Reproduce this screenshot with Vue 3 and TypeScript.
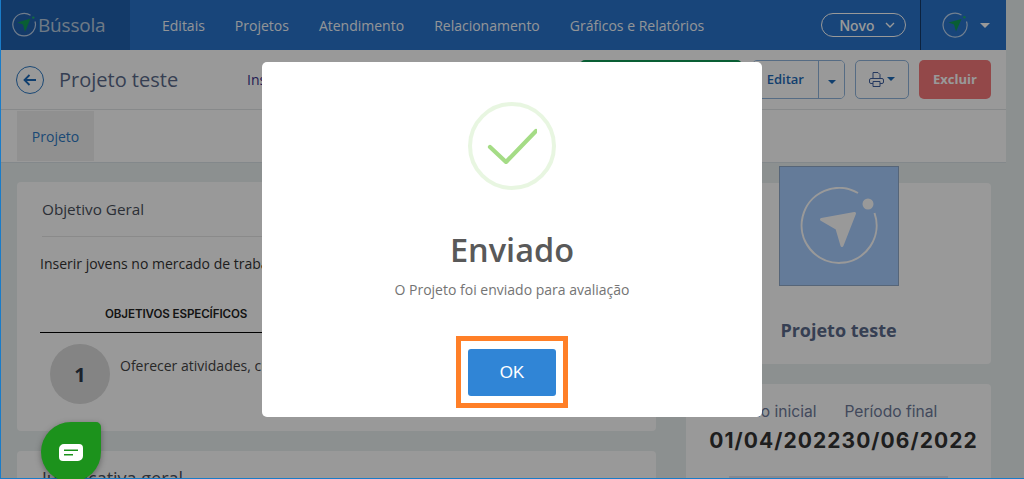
<script setup lang="ts">
const navItems: string[] = ['Editais', 'Projetos', 'Atendimento', 'Relacionamento', 'Gráficos e Relatórios']
</script>

<template>
  <div class="page">
    <div class="shell">
      <header class="topbar">
        <div class="brand">
          <svg class="brand-mark" viewBox="0 0 26 26" fill="none">
            <path d="M19.500 3.300A11.300 11.300 0 1 0 24 9.500" stroke="#fff" stroke-opacity=".7" stroke-width="1.200" />
            <circle cx="22.300" cy="5.600" r="1.200" fill="#1eb16a" />
            <path d="M6.500 10.500 19.500 6.500 14 20 12 12.500z" fill="#0f9d58" />
          </svg>
          <span class="brand-name">Bússola</span>
        </div>
        <nav class="nav">
          <a v-for="item in navItems" :key="item" class="nav-item">{{ item }}</a>
        </nav>
        <button class="new-btn">
          Novo
          <svg width="10" height="6" viewBox="0 0 10 6" fill="none"><path d="M1 1l4 4 4-4" stroke="#fff" stroke-width="1.400" /></svg>
        </button>
        <div class="user">
          <svg width="26" height="26" viewBox="0 0 26 26" fill="none">
            <path d="M19.500 3A12 12 0 1 0 24.500 9.500" stroke="#fff" stroke-opacity=".7" stroke-width="1.200" />
            <circle cx="22.400" cy="5.200" r="1.200" fill="#1eb16a" />
            <path d="M6.500 10.500 19.500 7 14 19.500 12 12.500z" fill="#0f9d58" />
          </svg>
          <span class="caret caret-light"></span>
        </div>
      </header>

      <section class="subbar">
        <span class="back">
          <svg width="14" height="12" viewBox="0 0 14 12" fill="none"><path d="M6.500 1 1.500 6l5 5M2 6h11" stroke="#1d6ab8" stroke-width="1.800" /></svg>
        </span>
        <h1 class="title">Projeto teste</h1>
        <span class="status">Inserir</span>
        <div class="actions">
          <button class="btn-send">Enviar para avaliação</button>
          <div class="split">
            <button class="btn-edit">Editar</button>
            <button class="btn-more"><span class="caret caret-small"></span></button>
          </div>
          <button class="btn-print">
            <svg width="15" height="15" viewBox="0 0 15 15" fill="none" stroke="#3f5f9f" stroke-width="1"><path d="M4 6.500V.5h5l2 2v4M4 11.500H2A1.500 1.500 0 0 1 .5 10V8A1.500 1.500 0 0 1 2 6.500h11A1.500 1.500 0 0 1 14.500 8v2a1.500 1.500 0 0 1-1.500 1.500h-2M4 9.500h7v5H4z" /></svg>
            <span class="caret caret-small"></span>
          </button>
          <button class="btn-delete">Excluir</button>
        </div>
      </section>

      <div class="tabs">
        <a class="tab">Projeto</a>
      </div>

      <main class="content">
        <div class="col-main">
          <article class="card card-goal">
            <h2 class="card-title">Objetivo Geral</h2>
            <p class="goal-text">Inserir jovens no mercado de trabalho por meio de capacitação</p>
            <div class="table-head"><span>OBJETIVOS ESPECÍFICOS</span></div>
            <div class="goal-row">
              <span class="goal-num">1</span>
              <p>Oferecer atividades, cursos e oficinas de qualificação</p>
            </div>
          </article>
          <article class="card card-why">
            <h2 class="card-title">Justificativa geral</h2>
          </article>
        </div>
        <aside class="col-side">
          <div class="card card-profile">
            <div class="cover">
              <svg width="78" height="78" viewBox="0 0 78 78" fill="none">
                <path d="M58 6A37.500 37.500 0 1 0 74.500 26" stroke="#fff" stroke-width="2" />
                <circle cx="68" cy="17" r="5.500" fill="#fff" />
                <path d="M21.500 32.500 54.500 26.500 42 58.500 37 41.500z" fill="#fff" stroke="#fff" stroke-width="3" stroke-linejoin="round" />
              </svg>
            </div>
            <strong class="profile-name">Projeto teste</strong>
          </div>
          <div class="card card-period">
            <div class="period-labels"><span>Período inicial</span><span>Período final</span></div>
            <div class="period-dates"><span>01/04/2022</span><span>30/06/2022</span></div>
            <div class="period-bar"></div>
          </div>
        </aside>
      </main>
    </div>

    <div class="overlay">
      <div class="modal">
        <div class="success">
          <svg width="50" height="36" viewBox="0 0 50 36" fill="none">
            <path d="M3 19 19 34 49 3" stroke="#a5dc86" stroke-width="4.200" stroke-linecap="round" stroke-linejoin="round" />
          </svg>
        </div>
        <h2 class="modal-title">Enviado</h2>
        <p class="modal-text">O Projeto foi enviado para avaliação</p>
        <div class="ok-frame">
          <button class="ok">OK</button>
        </div>
      </div>
    </div>

    <button class="chat">
      <svg class="chat-icon" width="24" height="18" viewBox="0 0 24 18">
        <path fill-rule="evenodd" d="M5 0h15a4 4 0 0 1 4 4v8a5 5 0 0 1-5 5H4a4 4 0 0 1-4-4V5a5 5 0 0 1 5-5zM5 5.500v1.600h14V5.500zM5 10v1.600h9V10z" fill="#fff" />
      </svg>
    </button>
  </div>
</template>

<style>
html,
body {
  margin: 0;
  overflow: hidden;
}
</style>

<style scoped>
.page {
  position: relative;
  width: 1024px;
  height: 479px;
  overflow: hidden;
  background: #eaf0f0;
  font-family: 'Open Sans', 'Liberation Sans', sans-serif;
  box-sizing: border-box;
}
.shell {
  width: 1006px;
  display: flex;
  flex-direction: column;
}
h1,
h2,
p {
  margin: 0;
  font-weight: 400;
}
button {
  font-family: inherit;
  cursor: pointer;
}
.topbar {
  height: 50px;
  flex: none;
  display: flex;
  align-items: center;
  background: #2873cb;
  color: #fff;
}
.brand {
  width: 130px;
  height: 50px;
  flex: none;
  display: flex;
  align-items: center;
  gap: 1px;
  padding-left: 11px;
  box-sizing: border-box;
  background: #2161b0;
}
.brand-mark {
  width: 26px;
  height: 26px;
}
.brand-name {
  font-size: 19px;
  color: #dfe5ea;
  opacity: 0.8;
  letter-spacing: -0.2px;
}
.nav {
  display: flex;
  gap: 30px;
  margin-left: 32px;
  flex: 1;
}
.nav-item {
  font-size: 14px;
  color: #fff;
  opacity: 0.95;
}
.new-btn {
  width: 85px;
  height: 24px;
  display: flex;
  align-items: center;
  justify-content: center;
  gap: 10px;
  background: transparent;
  color: #fff;
  border: 1px solid #fff;
  border-radius: 12px;
  font-family: Inter, 'Open Sans', sans-serif;
  font-size: 14px;
  font-weight: 500;
  padding: 0 0 0 7px;
}
.user {
  width: 86px;
  height: 50px;
  margin-left: 14px;
  box-sizing: border-box;
  border-left: 1px solid #143a6a;
  display: flex;
  align-items: center;
  padding-left: 21px;
  gap: 12px;
}
.caret {
  display: inline-block;
  width: 0;
  height: 0;
  border-left: 5px solid transparent;
  border-right: 5px solid transparent;
  border-top: 5px solid #1d6ab8;
}
.caret-light {
  border-top-color: #fff;
}
.caret-small {
  border-left-width: 4px;
  border-right-width: 4px;
  border-top-width: 4px;
}
.subbar {
  height: 60px;
  flex: none;
  box-sizing: border-box;
  border-bottom: 1px solid #e1e5e6;
  background: #fff;
  display: flex;
  align-items: center;
  padding: 0 15px 0 16px;
}
.back {
  width: 28px;
  height: 28px;
  box-sizing: border-box;
  border: 1px solid #2e7ac4;
  border-radius: 50%;
  display: flex;
  align-items: center;
  justify-content: center;
  flex: none;
}
.title {
  font-size: 20px;
  color: #5a6a8a;
  margin-left: 15px;
  width: 188px;
  flex: none;
}
.status {
  font-size: 14px;
  color: #3a2f8a;
}
.actions {
  display: flex;
  align-items: stretch;
  gap: 10px;
  height: 39px;
  margin-left: auto;
  margin-top: -1px;
}
.btn-send {
  width: 162px;
  background: #0f9d58;
  color: #fff;
  border: 0;
  border-radius: 5px;
  font-size: 13px;
  font-weight: 600;
}
.split {
  display: flex;
  width: 93px;
  box-sizing: border-box;
  border: 1px solid #8fb4dc;
  border-radius: 5px;
  overflow: hidden;
}
.btn-edit {
  flex: 1;
  background: #fff;
  color: #1d6ab8;
  border: 0;
  border-right: 1px solid #8fb4dc;
  font-size: 13px;
  font-weight: 600;
  text-align: right;
  padding: 0 14px 0 0;
}
.btn-more {
  width: 25px;
  flex: none;
  background: #fff;
  border: 0;
  padding: 0;
}
.btn-print {
  width: 54px;
  box-sizing: border-box;
  background: #fff;
  border: 1px solid #8fb4dc;
  border-radius: 5px;
  display: flex;
  align-items: center;
  justify-content: center;
  gap: 3px;
  padding: 0;
}
.btn-delete {
  width: 72px;
  background: #f6787a;
  color: #fff;
  border: 0;
  border-radius: 5px;
  font-size: 13px;
  font-weight: 700;
}
.tabs {
  height: 53px;
  flex: none;
  box-sizing: border-box;
  background: #fff;
  padding: 1px 0 2px 17px;
  border-bottom: 1px solid #dbe3e8;
}
.tab {
  width: 77px;
  height: 50px;
  display: flex;
  align-items: center;
  justify-content: center;
  background: #f0f0f0;
  color: #2e7ac4;
  font-size: 14px;
}
.content {
  flex: 1;
  display: grid;
  grid-template-columns: 639px 305px;
  column-gap: 30px;
  padding: 19px 15px 0 17px;
}
.card {
  background: #fff;
  border-radius: 4px;
}
.col-main,
.col-side {
  display: flex;
  flex-direction: column;
  gap: 20px;
}
.card-goal {
  height: 249px;
  box-sizing: border-box;
  padding-left: 23px;
}
.card-title {
  font-size: 15.300px;
  color: #4a4f5a;
  height: 54px;
  line-height: 54px;
  margin: 0 0 0 2px;
  border-bottom: 1px solid #e7e7e7;
}
.goal-text {
  font-size: 14px;
  color: #333;
  margin-top: 17px;
  white-space: nowrap;
}
.table-head {
  margin-top: 34px;
  height: 25px;
  width: 615px;
  border-bottom: 1px solid #000;
  font-family: Inter, 'Open Sans', sans-serif;
  font-size: 11.600px;
  font-weight: 600;
  color: #222;
}
.table-head span {
  margin-left: 65px;
  display: inline-block;
  letter-spacing: -0.1px;
}
.goal-row {
  display: flex;
  gap: 10px;
  padding: 11px 0 0 10px;
}
.goal-num {
  width: 60px;
  height: 60px;
  flex: none;
  border-radius: 50%;
  background: #dcdcdc;
  color: #2e3a4a;
  font-size: 20px;
  font-weight: 700;
  display: flex;
  align-items: center;
  justify-content: center;
}
.goal-row p {
  font-size: 14px;
  color: #444;
  margin-top: 12px;
  white-space: nowrap;
}
.card-why {
  height: 70px;
  padding-left: 25px;
}
.card-why .card-title {
  margin: 0;
  font-size: 18px;
  border: 0;
}
.card-profile {
  height: 181px;
  margin-top: 1px;
  display: flex;
  flex-direction: column;
  align-items: center;
}
.cover {
  width: 120px;
  height: 120px;
  flex: none;
  margin-top: -17px;
  box-sizing: border-box;
  border: 1px solid #8fa9c9;
  background: #a7cdff;
  display: flex;
  align-items: center;
  justify-content: center;
}
.profile-name {
  margin-top: 32px;
  font-size: 18px;
  font-weight: 700;
  color: #5a6a8a;
}
.card-period {
  height: 110px;
  padding-top: 18px;
  box-sizing: border-box;
  overflow: hidden;
  font-family: Inter, 'Open Sans', sans-serif;
}
.period-labels {
  display: flex;
  gap: 28px;
  margin-left: 27px;
  font-size: 15.600px;
  color: #6e7a9a;
  white-space: nowrap;
}
.period-dates {
  display: flex;
  justify-content: center;
  margin-top: 7px;
  margin-left: 10px;
  font-size: 21px;
  font-weight: 700;
  letter-spacing: 1.050px;
  color: #333;
  white-space: nowrap;
}
.period-bar {
  margin: 23px 43px 0;
  height: 8px;
  background: #e3e5ee;
}
.overlay {
  position: absolute;
  inset: 0;
  background: rgba(0, 0, 0, 0.4);
  display: flex;
  justify-content: center;
  align-items: flex-start;
  box-shadow: inset 1px -1px 0 #1a7cc8;
}
.modal {
  width: 500px;
  height: 355px;
  margin-top: 62px;
  background: #fff;
  border-radius: 5px;
  display: flex;
  flex-direction: column;
  align-items: center;
}
.success {
  width: 88px;
  height: 88px;
  box-sizing: border-box;
  margin-top: 40px;
  border: 4px solid rgba(165, 220, 134, 0.25);
  border-radius: 50%;
  display: flex;
  align-items: center;
  justify-content: center;
}
.modal-title {
  margin-top: 39px;
  font-size: 32.500px;
  line-height: 41px;
  font-weight: 600;
  color: #595959;
}
.modal-text {
  margin-top: 11px;
  font-size: 14px;
  line-height: 18px;
  color: #747474;
}
.ok-frame {
  margin-top: 37px;
  box-sizing: border-box;
  width: 112px;
  height: 72px;
  border: 5px solid #ff7f27;
  padding: 8px 7px 7px;
}
.ok {
  width: 88px;
  height: 47px;
  display: block;
  background: #3085d6;
  color: #fff;
  border: 0;
  border-radius: 3px;
  font-family: 'Liberation Sans', Arial, sans-serif;
  font-size: 17px;
  padding: 0;
}
.chat {
  position: absolute;
  left: 41px;
  top: 422px;
  width: 60px;
  height: 60px;
  border: 0;
  padding: 0;
  background: #1c921c;
  border-radius: 50% 5px 50% 50%;
  box-shadow: 0 2px 6px rgba(0, 0, 0, 0.35);
  display: flex;
  align-items: center;
  justify-content: center;
}
.chat-icon {
  margin-top: 2px;
}
</style>
